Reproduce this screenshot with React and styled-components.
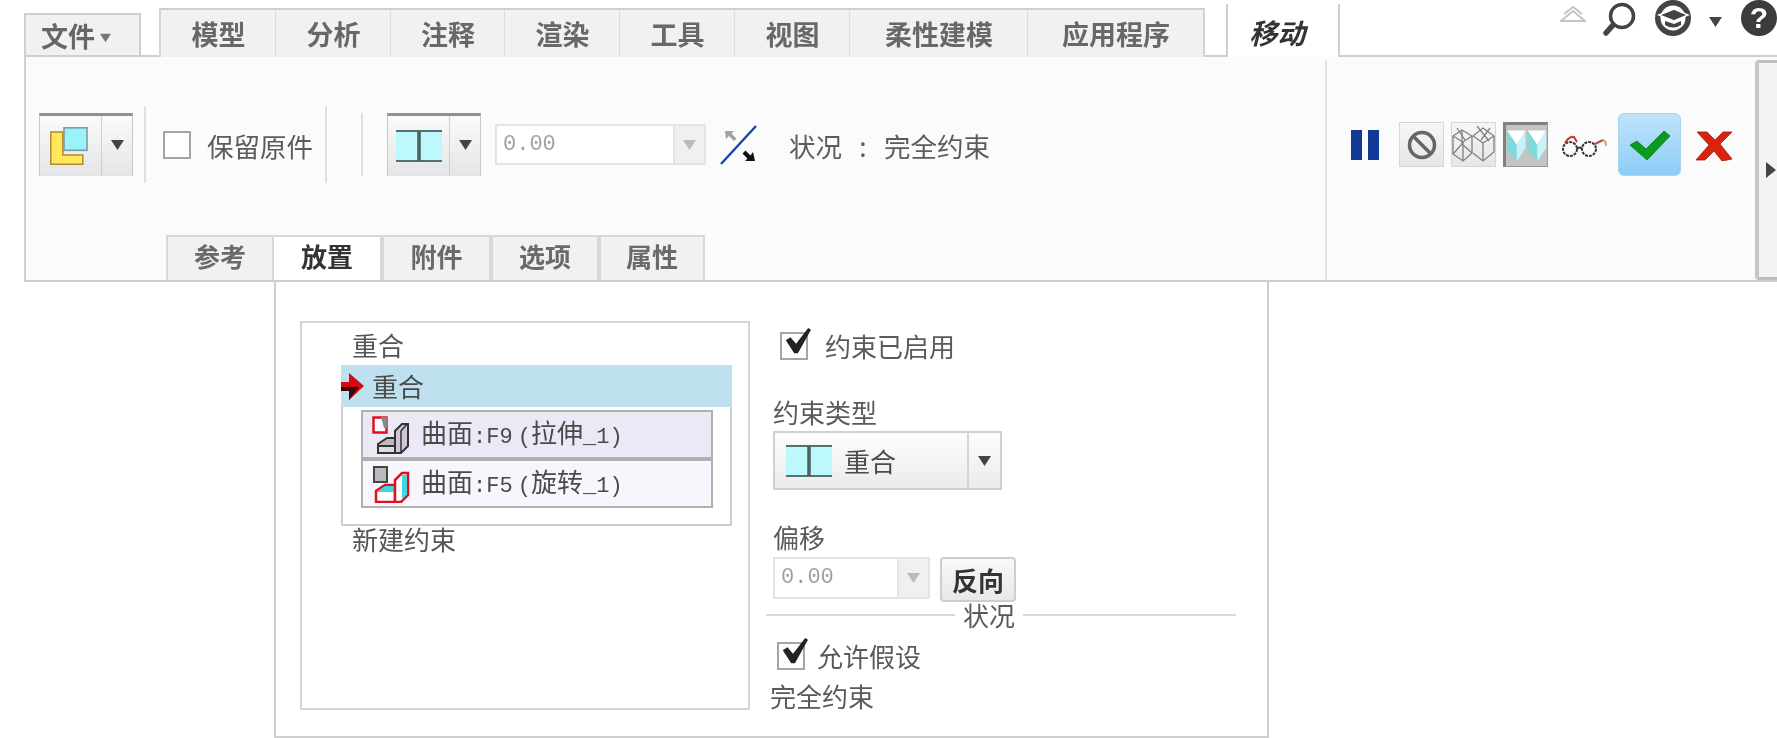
import React from "react";
import styled, { createGlobalStyle } from "styled-components";

const CJK = `"Noto Sans CJK SC", "Liberation Sans", sans-serif`;

const GlobalStyle = createGlobalStyle`
    html, body {
        margin: 0;
        padding: 0;
        background: #fff;
    }
    * {
        box-sizing: border-box;
    }
`;

const MAIN_TABS = [
    ["模型", 115],
    ["分析", 115],
    ["注释", 114],
    ["渲染", 115],
    ["工具", 115],
    ["视图", 115],
    ["柔性建模", 178],
    ["应用程序", 175],
];

const SUB_TABS = [
    ["参考", 108, false],
    ["放置", 108, true],
    ["附件", 109, false],
    ["选项", 108, false],
    ["属性", 106, false],
];

// icons
const Triangle = ({ color = "#444" }) => (
    <svg width="13" height="10" viewBox="0 0 13 10">
        <path d="M0 0h13L6.5 10z" fill={color} />
    </svg>
);

const PlacementIcon = () => (
    <svg width="38" height="38" viewBox="0 0 38 38">
        <path d="M0.800 5h12v23h20v9.200H0.800z" fill="#ffe95a" stroke="#b8863a" strokeWidth="1.5" />
        <rect x="14" y="0.8" width="23" height="22.500" fill="#9af3fa" stroke="#7f9a9f" strokeWidth="1.6" />
    </svg>
);

const CoincidentIcon = ({ w = 46, h = 32 }) => (
    <svg width={w} height={h} viewBox="0 0 46 32">
        <rect x="0" y="1" width="46" height="30" fill="#bdf8fc" />
        <path d="M0 1h46M0 31h46" stroke="#55706f" strokeWidth="2" />
        <path d="M23 1v30" stroke="#4d5f5f" strokeWidth="3.5" />
    </svg>
);

const FlipIcon = () => (
    <svg width="37" height="40" viewBox="0 0 37 40">
        <path d="M1 39L36 1" stroke="#1c43a8" strokeWidth="2.4" />
        <path d="M5 6h9l-2.500 2.500 5 5-2.500 2.500-5-5L6 14z" fill="#a3a39a" />
        <path d="M35 36H25l2.500-2.500-5-5 3-3 5 5L33 27z" fill="#111" />
    </svg>
);

const PauseIcon = () => (
    <svg width="28" height="30" viewBox="0 0 28 30">
        <rect x="0" y="0" width="11" height="30" fill="#103a96" />
        <rect x="17" y="0" width="11" height="30" fill="#103a96" />
    </svg>
);

const BanIcon = () => (
    <svg width="30" height="30" viewBox="0 0 30 30" fill="none" stroke="#666" strokeWidth="3.5">
        <circle cx="15" cy="15" r="12.500" />
        <path d="M6 6l18 18" />
    </svg>
);

const WireIcon = () => (
    <svg width="43" height="38" viewBox="0 0 43 38" fill="none" stroke="#808080" strokeWidth="1.300">
        <path d="M1 10l9-6 10 6v17l-9 8-10-7z" />
        <path d="M1 10l10 6 9-6M11 16v19M10 4v14l-9 10M10 18l10 9" />
        <path d="M21 10l10-8 11 8v16l-11 9-10-8" />
        <path d="M21 10l10 7 11-7M31 17v18M25 0l12 15M38 2l-9 12M5 2l8 12" />
    </svg>
);

const ShadedIcon = () => (
    <svg width="42" height="36" viewBox="0 0 42 36">
        <path d="M1 2h19l-9 15z" fill="#fff" />
        <path d="M22 2h19l-9 15z" fill="#fff" />
        <path d="M1 2l10 15v17L1 22z" fill="#7fd8dc" />
        <path d="M11 17l9-15v18l-9 14z" fill="#c5f4f6" />
        <path d="M22 2l10 15v17L22 22z" fill="#7fd8dc" />
        <path d="M32 17l9-15v18l-9 14z" fill="#c5f4f6" />
    </svg>
);

const GlassesIcon = () => (
    <svg width="46" height="22" viewBox="0 0 46 22" fill="none" strokeWidth="2">
        <circle cx="9" cy="14" r="7" stroke="#333" strokeDasharray="3 1" />
        <circle cx="28" cy="14" r="7" stroke="#333" strokeDasharray="3 1" />
        <path d="M16 14q3-3 5 0" stroke="#333" />
        <path d="M4 8q4-7 9-6l3 5" stroke="#b5452f" />
        <path d="M34 9l8-4" stroke="#a55" />
        <path d="M42 5q3 1 3 6" stroke="#d9a05b" />
    </svg>
);

const CheckIcon = () => (
    <svg width="40" height="30" viewBox="0 0 40 30">
        <path d="M0 15l7-4 9 8L34 1l6 5-23 24z" fill="#0b9a1e" stroke="#107a1e" strokeWidth="0.8" />
    </svg>
);

const CrossIcon = () => (
    <svg width="37" height="32" viewBox="0 0 37 32">
        <path d="M1 3h10l8 8 8-8h9L24 15l12 15-10 2-8-10-9 9H0l13-15z" fill="#d8230f" stroke="#a51b0e" strokeWidth="0.8" />
    </svg>
);

const ChevronIcon = () => (
    <svg width="26" height="17" viewBox="0 0 26 17" fill="none" stroke="#c4c4c4" strokeWidth="2">
        <path d="M1 16L13 6l12 10H1z" />
        <path d="M4 9l9-7 9 7" />
    </svg>
);

const SearchIcon = () => (
    <svg width="34" height="34" viewBox="0 0 34 34" fill="none" stroke="#444">
        <circle cx="19" cy="14" r="11.500" strokeWidth="3.500" />
        <path d="M10 23L3 31" strokeWidth="5.500" strokeLinecap="round" />
    </svg>
);

const LearnIcon = () => (
    <svg width="36" height="36" viewBox="0 0 36 36">
        <circle cx="18" cy="18" r="18" fill="#444" />
        <circle cx="18" cy="18" r="12.500" fill="#fff" />
        <path d="M4 15l15-6 14 6-14 6z" fill="#444" stroke="#fff" strokeWidth="1.500" />
        <path d="M10 21v4q8 5 16 0v-4l-7 3z" fill="#444" />
    </svg>
);

const FaceOneIcon = () => (
    <svg width="38" height="38" viewBox="0 0 38 38">
        <rect x="1.500" y="1.500" width="13" height="15" fill="#fff" stroke="#e01020" strokeWidth="2.500" />
        <path d="M9 1h6v11h-3z" fill="#888" />
        <path d="M6 37V28l9-6h9v15z" fill="#bbb" stroke="#333" strokeWidth="2" />
        <path d="M6 30h17v7H6z" fill="#ddd" stroke="#333" strokeWidth="2" />
        <path d="M23 37V15l7-7h6v22l-7 7z" fill="#cfc6dc" stroke="#333" strokeWidth="2" />
        <path d="M29 37V15l6-7" fill="none" stroke="#333" strokeWidth="1.500" />
    </svg>
);

const FaceTwoIcon = () => (
    <svg width="38" height="38" viewBox="0 0 38 38">
        <rect x="2" y="2" width="13" height="15" fill="#bbb" stroke="#444" strokeWidth="2" />
        <path d="M4 37V26l9-6h10v17z" fill="#fff" stroke="#e01020" strokeWidth="2.500" />
        <path d="M5 27h17l4-6H13z" fill="#43d6dc" />
        <path d="M23 37V15l7-7h6v22l-7 7z" fill="#fff" stroke="#e01020" strokeWidth="2.500" />
        <path d="M30 10h5v19l-5 6z" fill="#43d6dc" />
    </svg>
);

const ArrowIcon = () => (
    <svg width="23" height="27" viewBox="0 0 23 27">
        <path d="M0 9h8V0l15 13L8 27v-9H0z" fill="#d30a14" />
        <path d="M0 14h18L8 27v-9H0z" fill="#3a0a0a" />
    </svg>
);

const App = () => {
    return (
        <Page>
            <GlobalStyle />
            <TopBar>
                <FileTab>
                    文件
                    <Triangle color="#777" />
                </FileTab>
                <TabGap />
                <MainTabs>
                    {MAIN_TABS.map(([label, width]) => (
                        <MainTab key={label} $width={width}>
                            {label}
                        </MainTab>
                    ))}
                </MainTabs>
                <BracketGap />
                <ContextTab>移动</ContextTab>
                <QuickTools>
                    <ChevronIcon />
                    <SearchBox>
                        <SearchIcon />
                    </SearchBox>
                    <LearnBox>
                        <LearnIcon />
                    </LearnBox>
                    <SmallCaret>
                        <Triangle color="#444" />
                    </SmallCaret>
                    <HelpBadge>?</HelpBadge>
                </QuickTools>
            </TopBar>

            <Ribbon>
                <RibbonMain>
                    <ToolRow>
                        <SplitButton>
                            <SplitFace $pad={10}>
                                <PlacementIcon />
                            </SplitFace>
                            <SplitCaret>
                                <Triangle />
                            </SplitCaret>
                        </SplitButton>
                        <ToolSep $left={11} />
                        <BigCheck $left={17} />
                        <ToolText $left={16}>保留原件</ToolText>
                        <ToolSep $left={12} />
                        <ToolSep $left={34} $short />
                        <SplitButton $left={24}>
                            <SplitFace $pad={8}>
                                <CoincidentIcon />
                            </SplitFace>
                            <SplitCaret>
                                <Triangle />
                            </SplitCaret>
                        </SplitButton>
                        <NumberInput $left={14} $width={211} $split={178}>
                            <NumberValue>0.00</NumberValue>
                            <NumberCaret>
                                <Triangle color="#bbb" />
                            </NumberCaret>
                        </NumberInput>
                        <FlipBox>
                            <FlipIcon />
                        </FlipBox>
                        <ToolText $left={32}>
                            状况<StatusColon>:</StatusColon>完全约束
                        </ToolText>
                    </ToolRow>
                    <SubTabs>
                        {SUB_TABS.map(([label, width, active]) => (
                            <SubTab key={label} $width={width} $active={active}>
                                {label}
                            </SubTab>
                        ))}
                    </SubTabs>
                </RibbonMain>

                <RibbonActions>
                    <PauseBox>
                        <PauseIcon />
                    </PauseBox>
                    <ToolToggle $left={20}>
                        <BanIcon />
                    </ToolToggle>
                    <ToolToggle $left={7}>
                        <WireIcon />
                    </ToolToggle>
                    <ToolToggle $left={7} $pressed>
                        <ShadedIcon />
                    </ToolToggle>
                    <GlassesBox>
                        <GlassesIcon />
                    </GlassesBox>
                    <OkButton>
                        <CheckIcon />
                    </OkButton>
                    <CancelBox>
                        <CrossIcon />
                    </CancelBox>
                </RibbonActions>

                <CollapseStrip>
                    <CollapseArrow />
                </CollapseStrip>
            </Ribbon>

            <Panel>
                <ConstraintList>
                    <SetName>重合</SetName>
                    <ActiveRow>
                        <ArrowIcon />
                        <span>重合</span>
                    </ActiveRow>
                    <RefBox>
                        <RefItem $tint="#ece8f5">
                            <FaceOneIcon />
                            <RefLabel>
                                曲面<Mono>:F9 (</Mono>拉伸<Mono>_1)</Mono>
                            </RefLabel>
                        </RefItem>
                        <RefItem $tint="#f8f6fc">
                            <FaceTwoIcon />
                            <RefLabel>
                                曲面<Mono>:F5 (</Mono>旋转<Mono>_1)</Mono>
                            </RefLabel>
                        </RefItem>
                    </RefBox>
                    <NewName>新建约束</NewName>
                </ConstraintList>

                <Settings>
                    <CheckRow $top={10} $left={14} $gap={17}>
                        <BigCheck $checked>
                            <CheckMark />
                        </BigCheck>
                        约束已启用
                    </CheckRow>
                    <FieldLabel $top={36}>约束类型</FieldLabel>
                    <TypeSelect>
                        <TypeFace>
                            <CoincidentIcon />
                            重合
                        </TypeFace>
                        <TypeCaret>
                            <Triangle />
                        </TypeCaret>
                    </TypeSelect>
                    <FieldLabel $top={32}>偏移</FieldLabel>
                    <OffsetRow>
                        <NumberInput $width={157} $split={124} $height={42}>
                            <NumberValue>0.00</NumberValue>
                            <NumberCaret>
                                <Triangle color="#bbb" />
                            </NumberCaret>
                        </NumberInput>
                        <FlipButton>反向</FlipButton>
                    </OffsetRow>
                    <GroupTitle>
                        <GroupLine $width={189} />
                        <GroupName>状况</GroupName>
                        <GroupLine $width={213} />
                    </GroupTitle>
                    <CheckRow $top={13} $left={11} $gap={12}>
                        <BigCheck $checked>
                            <CheckMark />
                        </BigCheck>
                        允许假设
                    </CheckRow>
                    <StatusText>完全约束</StatusText>
                </Settings>
            </Panel>
        </Page>
    );
};

const CheckMark = () => (
    <CheckSvg viewBox="0 0 30 30">
        <path d="M3 13l5-3 6 7L27 0l3 2-14 25h-4z" fill="#222" />
    </CheckSvg>
);

const Page = styled.div`
    width: 1777px;
    height: 738px;
    overflow: hidden;
    background: #fff;
    font-family: ${CJK};
    color: #555;
    filter: blur(0.4px);
`;

const TopBar = styled.div`
    display: flex;
    height: 57px;
    padding-left: 24px;
    align-items: flex-end;
`;

const FileTab = styled.div`
    width: 118px;
    height: 44px;
    display: flex;
    align-items: center;
    gap: 5px;
    padding-left: 15px;
    font-size: 27px;
    font-weight: 700;
    color: #666;
    background: #f1f1f2;
    border: 2px solid #cfcfcf;
    border-bottom: 2px solid #cfcfcf;

    svg {
        margin-top: 6px;
        width: 11px;
    }
`;

const TabGap = styled.div`
    width: 19px;
    height: 2px;
    background: #cfcfcf;
`;

const MainTabs = styled.div`
    display: flex;
    height: 49px;
    background: #f0f1f3;
    border-top: 2px solid #cfcfcf;
    border-left: 2px solid #d4d4d4;
    border-right: 2px solid #d4d4d4;
`;

const MainTab = styled.div`
    width: ${(p) => p.$width}px;
    display: flex;
    align-items: center;
    justify-content: center;
    font-size: 27px;
    font-weight: 700;
    color: #686868;
    border-right: 1px solid #dcdcdc;

    &:last-child {
        border-right: none;
    }
`;

const BracketGap = styled.div`
    width: 21px;
    height: 2px;
    background: #cfcfcf;
`;

const ContextTab = styled.div`
    width: 115px;
    height: 53px;
    display: flex;
    align-items: center;
    padding: 3px 0 0 21px;
    font-size: 28px;
    font-weight: 700;
    font-style: italic;
    color: #333;
    border-left: 2px solid #cfcfcf;
    border-right: 2px solid #cfcfcf;
    background: #fff;
`;

const QuickTools = styled.div`
    flex: 1;
    height: 57px;
    display: flex;
    align-items: flex-start;
    padding-left: 220px;
    border-bottom: 2px solid #cfcfcf;

    > svg {
        margin-top: 5px;
    }
`;

const SearchBox = styled.div`
    margin: 2px 0 0 17px;
`;

const LearnBox = styled.div`
    margin-left: 18px;
`;

const SmallCaret = styled.div`
    margin: 8px 0 0 18px;
`;

const HelpBadge = styled.div`
    width: 36px;
    height: 36px;
    margin-left: 19px;
    border-radius: 50%;
    background: #3c3c3c;
    color: #fff;
    font-family: "Liberation Sans", sans-serif;
    font-size: 30px;
    font-weight: 700;
    line-height: 36px;
    text-align: center;
`;

const Ribbon = styled.div`
    display: flex;
    height: 225px;
    margin-left: 24px;
    background: #fbfbfb;
    border-left: 2px solid #cfcfcf;
    border-bottom: 2px solid #cfcfcf;
`;

const RibbonMain = styled.div`
    width: 1299px;
    display: flex;
    flex-direction: column;
`;

const ToolRow = styled.div`
    height: 178px;
    display: flex;
    align-items: center;
    padding: 0 0 3px 13px;
`;

const SplitButton = styled.div`
    width: 94px;
    height: 63px;
    margin-left: ${(p) => p.$left || 0}px;
    display: flex;
    background: linear-gradient(#fafafa, #e4e5e7);
    border-top: 3px solid #909090;
    border-left: 1px solid #c8c8c8;
    border-right: 1px solid #c8c8c8;
`;

const SplitFace = styled.div`
    width: 62px;
    display: flex;
    align-items: center;
    padding: 0 0 0 ${(p) => p.$pad}px;
    border-right: 1px solid #cfcfcf;
`;

const SplitCaret = styled.div`
    flex: 1;
    display: flex;
    justify-content: center;
    padding-top: 24px;
`;

const ToolSep = styled.div`
    width: 2px;
    height: ${(p) => (p.$short ? 63 : 77)}px;
    margin-left: ${(p) => p.$left}px;
    background: #e0e0e0;
`;

const BigCheck = styled.div`
    position: relative;
    flex: none;
    width: 28px;
    height: 28px;
    margin-left: ${(p) => p.$left || 0}px;
    background: #fff;
    border: 2px solid #a5a5a5;
`;

const CheckSvg = styled.svg`
    position: absolute;
    left: 1px;
    top: -6px;
    width: 28px;
    height: 28px;
`;

const ToolText = styled.div`
    margin-left: ${(p) => p.$left}px;
    padding-top: 2px;
    font-size: 26.500px;
    line-height: 30px;
    white-space: nowrap;
    color: #5c5c5c;
`;

const StatusColon = styled.span`
    display: inline-block;
    width: 42px;
    text-align: center;
`;

const NumberInput = styled.div`
    width: ${(p) => p.$width}px;
    height: ${(p) => p.$height || 41}px;
    margin-left: ${(p) => p.$left || 0}px;
    display: grid;
    grid-template-columns: ${(p) => p.$split}px 1fr;
    background: #fff;
    border: 2px solid #e4e4e4;
`;

const NumberValue = styled.div`
    display: flex;
    align-items: center;
    padding-left: 6px;
    font-family: "Liberation Mono", monospace;
    font-size: 22px;
    color: #a0a0a0;
    border-right: 2px solid #e4e4e4;
`;

const NumberCaret = styled.div`
    display: flex;
    align-items: center;
    justify-content: center;
    background: #f0f0f0;
`;

const FlipBox = styled.div`
    display: flex;
    margin-left: 14px;
`;

const SubTabs = styled.div`
    display: flex;
    height: 45px;
    margin-left: 140px;
`;

const SubTab = styled.div`
    width: ${(p) => p.$width}px;
    display: flex;
    align-items: center;
    justify-content: center;
    font-size: 26px;
    font-weight: 700;
    color: ${(p) => (p.$active ? "#333" : "#6a6a6a")};
    background: ${(p) => (p.$active ? "#fff" : "#f1f1f2")};
    border: 2px solid #d8d8d8;
    border-bottom: none;
    border-left: ${(p) => (p.$active ? "none" : "2px solid #d8d8d8")};
    padding-bottom: 6px;
`;

const RibbonActions = styled.div`
    width: 430px;
    display: flex;
    align-items: center;
    padding: 0 0 51px 24px;
    border-left: 2px solid #e2e2e2;
    margin-top: 3px;
`;

const PauseBox = styled.div`
    display: flex;
`;

const ToolToggle = styled.div`
    width: 45px;
    height: 45px;
    margin-left: ${(p) => p.$left}px;
    display: flex;
    align-items: center;
    justify-content: center;
    border: 1px solid ${(p) => (p.$pressed ? "#9a9a9a" : "#d6d6d6")};
    border-top: ${(p) => (p.$pressed ? "3px solid #808080" : "1px solid #d6d6d6")};
    border-left: ${(p) => (p.$pressed ? "3px solid #808080" : "1px solid #d6d6d6")};
    background: ${(p) => (p.$pressed ? "#c4c4c4" : "linear-gradient(#f6f6f6, #e6e6e6)")};
`;

const GlassesBox = styled.div`
    display: flex;
    margin: 2px 0 0 13px;
`;

const OkButton = styled.div`
    width: 63px;
    height: 63px;
    margin-left: 11px;
    display: flex;
    align-items: center;
    justify-content: center;
    border-radius: 6px;
    background: linear-gradient(#c0e2fa, #8ccdf7);
    border: 1px solid #a8d4f2;
`;

const CancelBox = styled.div`
    display: flex;
    margin-left: 15px;
`;

const CollapseStrip = styled.div`
    flex: 1;
    margin-top: 3px;
    display: flex;
    align-items: center;
    padding-left: 7px;
    background: #f3f3f3;
    border-left: 4px solid #c6c6c6;
    border-top: 3px solid #bdbdbd;
    border-bottom: 3px solid #bdbdbd;
    border-top-left-radius: 4px;
    border-bottom-left-radius: 4px;
`;

const CollapseArrow = styled.div`
    width: 0;
    height: 0;
    border-top: 8px solid transparent;
    border-bottom: 8px solid transparent;
    border-left: 10px solid #444;
`;

const Panel = styled.div`
    display: flex;
    width: 995px;
    height: 456px;
    margin-left: 274px;
    padding: 39px 0 0 24px;
    background: #fff;
    border: 2px solid #cfcfcf;
    border-top: none;
`;

const ConstraintList = styled.div`
    width: 450px;
    height: 389px;
    padding: 4px 16px 0 39px;
    border: 2px solid #d4d4d4;
    font-size: 26px;
    line-height: 36px;
`;

const SetName = styled.div`
    padding-left: 11px;
    height: 38px;
    color: #555;
`;

const NewName = styled(SetName)`
    margin-top: -5px;
`;

const ActiveRow = styled.div`
    height: 42px;
    display: flex;
    align-items: center;
    gap: 8px;
    background: #bfe0ef;
    color: #4a4a4a;
`;

const RefBox = styled.div`
    height: 119px;
    padding: 3px 17px 0 18px;
    margin-bottom: 0;
    border: 2px solid #cfcfcf;
    border-top: none;
`;

const RefItem = styled.div`
    height: 49px;
    display: flex;
    align-items: center;
    gap: 11px;
    padding-left: 9px;
    background: ${(p) => p.$tint};
    border: 2px solid #b0b0b0;
`;

const RefLabel = styled.div`
    font-size: 26px;
    color: #4a4a4a;
    white-space: nowrap;
`;

const Mono = styled.span`
    font-family: "Liberation Mono", monospace;
    font-size: 22px;
    word-spacing: -8px;
`;

const Settings = styled.div`
    width: 470px;
    margin-left: 16px;
    display: flex;
    flex-direction: column;
    font-size: 26px;
    line-height: 30px;
    color: #5a5a5a;
`;

const CheckRow = styled.div`
    display: flex;
    align-items: center;
    height: 30px;
    margin-top: ${(p) => p.$top}px;
    padding-left: ${(p) => p.$left}px;
    gap: ${(p) => p.$gap}px;
`;

const FieldLabel = styled.div`
    margin: ${(p) => p.$top}px 0 0 7px;
`;

const TypeSelect = styled.div`
    width: 229px;
    height: 59px;
    margin: 4px 0 0 7px;
    display: flex;
    background: linear-gradient(#fdfdfd, #ebebeb);
    border: 2px solid #d0d0d0;
`;

const TypeFace = styled.div`
    width: 194px;
    display: flex;
    align-items: center;
    gap: 12px;
    padding-left: 11px;
    color: #4a4a4a;
    border-right: 2px solid #d4d4d4;
`;

const TypeCaret = styled.div`
    flex: 1;
    display: flex;
    align-items: center;
    justify-content: center;
`;

const OffsetRow = styled.div`
    display: flex;
    align-items: flex-start;
    gap: 10px;
    margin: 5px 0 0 7px;
`;

const FlipButton = styled.div`
    width: 76px;
    height: 45px;
    display: flex;
    align-items: center;
    justify-content: center;
    font-size: 26px;
    font-weight: 700;
    color: #333;
    background: linear-gradient(#f8f8f8, #e8e8e8);
    border: 2px solid #cdcdcd;
    border-radius: 4px;
`;

const GroupTitle = styled.div`
    display: flex;
    align-items: center;
    height: 26px;
`;

const GroupLine = styled.div`
    width: ${(p) => p.$width}px;
    height: 2px;
    background: #dadada;
`;

const GroupName = styled.div`
    width: 68px;
    text-align: center;
`;

const StatusText = styled.div`
    margin: 10px 0 0 4px;
`;

export default App;
